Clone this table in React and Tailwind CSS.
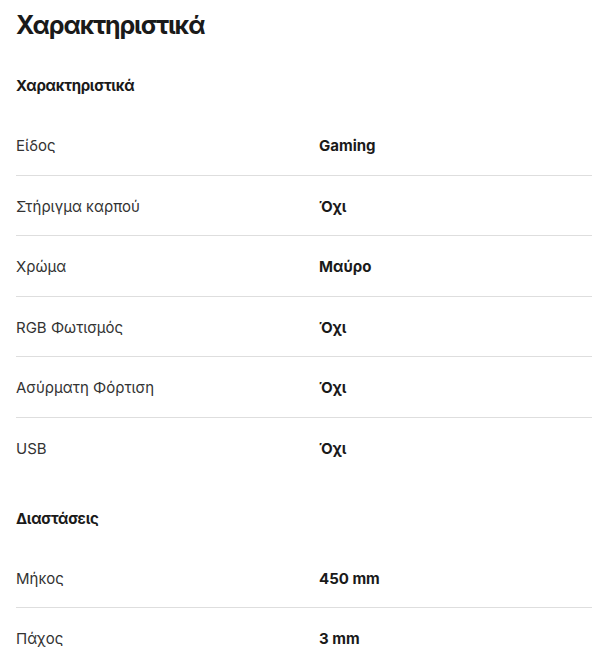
export default function App() {
  const sections = [
    {
      title: "Χαρακτηριστικά",
      rows: [
        ["Είδος", "Gaming"],
        ["Στήριγμα καρπού", "Όχι"],
        ["Χρώμα", "Μαύρο"],
        ["RGB Φωτισμός", "Όχι"],
        ["Ασύρματη Φόρτιση", "Όχι"],
        ["USB", "Όχι"],
      ],
    },
    {
      title: "Διαστάσεις",
      rows: [
        ["Μήκος", "450 mm"],
        ["Πάχος", "3 mm"],
      ],
    },
  ];
  return (
    <div className="bg-white pl-4 text-[#1a1a1a]" style={{ fontFamily: "Inter, 'Noto Sans', sans-serif" }}>
      <h1 className="text-[25px] font-bold leading-[32px] pt-[9px] tracking-[-0.045em]">Χαρακτηριστικά</h1>
      {sections.map((s, i) => (
        <div key={i} className={i === 0 ? "mt-[35px]" : "mt-[31px]"}>
          <h2 className="text-[15px] font-bold leading-5 pb-[19px] tracking-[-0.02em]">{s.title}</h2>
          {s.rows.map(([k, v], j) => (
            <div
              key={j}
              className={"flex pt-[21px] pb-[19px] text-[15px] leading-[19.6px] " + (j < s.rows.length - 1 ? "border-b border-[#dedede]" : "")}
            >
              <div className="w-[303px] text-[#333]">{k}</div>
              <div className="font-bold">{v}</div>
            </div>
          ))}
        </div>
      ))}
    </div>
  );
}
